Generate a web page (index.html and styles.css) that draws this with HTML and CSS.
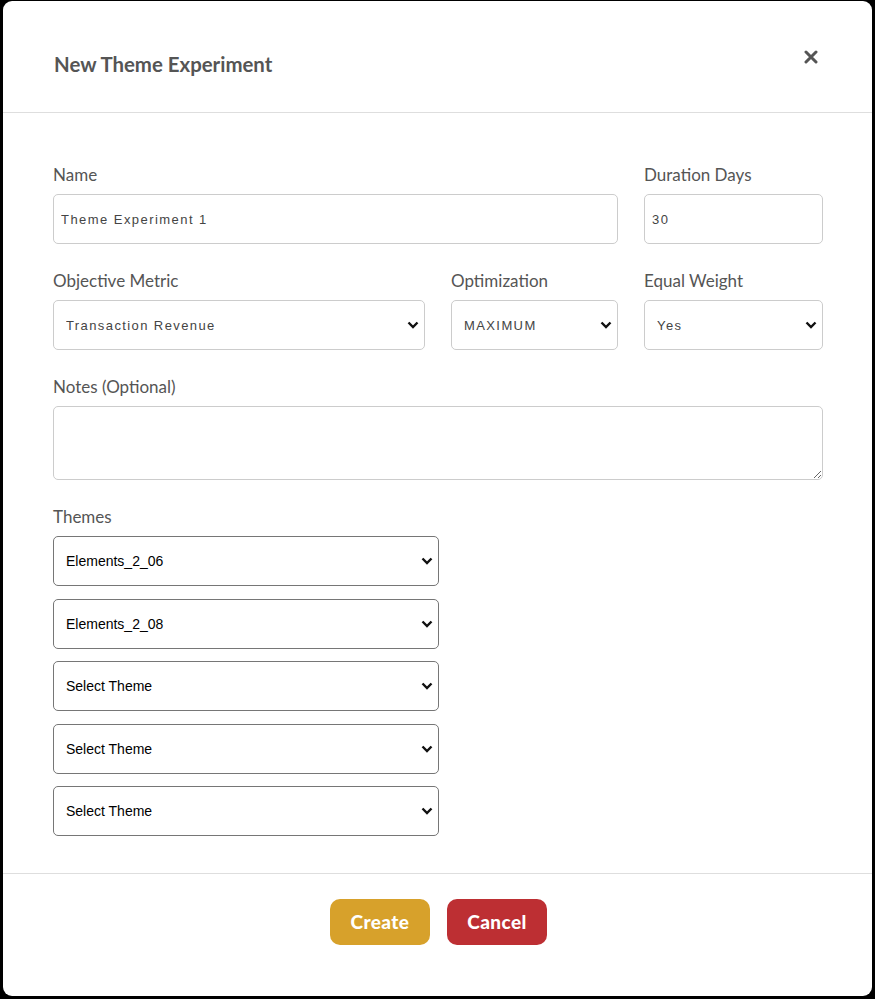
FILE: index.html
```html
<!DOCTYPE html>
<html lang="en">
<head>
    <meta charset="UTF-8">
    <meta name="viewport" content="width=device-width, initial-scale=1.0">
    <title>New Theme Experiment</title>
    <link rel="stylesheet" href="styles.css">
</head>
<body>
    <div class="modal">
        <div class="modal-header">
            <h2 class="modal-title">New Theme Experiment</h2>
            <button class="close-btn" aria-label="Close">
                <svg width="14" height="14" viewBox="0 0 14 14">
                    <path d="M2 2 L12 12 M12 2 L2 12" stroke="#555" stroke-width="3" stroke-linecap="round"/>
                </svg>
            </button>
        </div>

        <div class="modal-body">
            <div class="form-grid">
                <div class="field span-2">
                    <label class="field-label">Name</label>
                    <input class="text-input" type="text" value="Theme Experiment 1">
                </div>
                <div class="field">
                    <label class="field-label">Duration Days</label>
                    <input class="text-input" type="text" value="30">
                </div>

                <div class="field">
                    <label class="field-label">Objective Metric</label>
                    <select class="form-select">
                        <option>Transaction Revenue</option>
                    </select>
                </div>
                <div class="field">
                    <label class="field-label">Optimization</label>
                    <select class="form-select">
                        <option>MAXIMUM</option>
                    </select>
                </div>
                <div class="field">
                    <label class="field-label">Equal Weight</label>
                    <select class="form-select">
                        <option>Yes</option>
                    </select>
                </div>

                <div class="field span-3">
                    <label class="field-label">Notes (Optional)</label>
                    <textarea class="notes"></textarea>
                </div>
            </div>

            <div class="themes">
                <label class="field-label">Themes</label>
                <select class="theme-select"><option>Elements_2_06</option></select>
                <select class="theme-select"><option>Elements_2_08</option></select>
                <select class="theme-select"><option>Select Theme</option></select>
                <select class="theme-select"><option>Select Theme</option></select>
                <select class="theme-select"><option>Select Theme</option></select>
            </div>
        </div>

        <div class="modal-footer">
            <button class="btn btn-create">Create</button>
            <button class="btn btn-cancel">Cancel</button>
        </div>
    </div>
</body>
</html>
```

FILE: styles.css
```css
body {
    margin: 0;
    padding: 1px 3px 3px;
    background: #000;
    font-family: Lato, "Open Sans", sans-serif;
}

.modal {
    background: #fff;
    border-radius: 9px;
    height: 995px;
    box-sizing: border-box;
    display: flex;
    flex-direction: column;
}

.modal-header {
    height: 111px;
    border-bottom: 1px solid #dedede;
    display: flex;
    justify-content: space-between;
    align-items: flex-start;
    padding: 0 54px 0 51px;
}

.modal-title {
    margin: 51px 0 0;
    font-size: 20.4px;
    line-height: 24px;
    font-weight: 700;
    color: #555;
}

.close-btn {
    margin-top: 49px;
    padding: 0;
    border: none;
    background: none;
    width: 14px;
    height: 14px;
    display: block;
}

.close-btn svg {
    display: block;
}

.modal-body {
    flex: 1;
    padding: 51px 49px 37px 50px;
}

.form-grid {
    display: grid;
    grid-template-columns: 372px 167px minmax(0, 1fr);
    column-gap: 26px;
    row-gap: 26px;
}

.span-2 {
    grid-column: span 2;
}

.span-3 {
    grid-column: span 3;
}

.field {
    display: flex;
    flex-direction: column;
    min-width: 0;
}

.field-label {
    display: block;
    font-size: 17px;
    line-height: 22px;
    color: #555;
    margin-bottom: 8px;
}

.text-input {
    min-width: 0;
    height: 50px;
    box-sizing: border-box;
    border: 1px solid #ccc;
    border-radius: 5px;
    padding: 0 7px;
    font-family: "Liberation Sans", Arial, sans-serif;
    font-size: 13px;
    letter-spacing: 1.45px;
    color: #444;
}

/* bold chevron like the reference selects */
.form-select,
.theme-select {
    -webkit-appearance: none;
    appearance: none;
    min-width: 0;
    height: 50px;
    box-sizing: border-box;
    border-radius: 5px;
    background: #fff url("data:image/svg+xml,%3Csvg xmlns='http://www.w3.org/2000/svg' width='12' height='8' viewBox='0 0 12 8'%3E%3Cpath d='M1.5 1.5 L6 6 L10.5 1.5' fill='none' stroke='%23111' stroke-width='2.4'/%3E%3C/svg%3E") no-repeat right 5px center;
    font-family: "Liberation Sans", Arial, sans-serif;
}

.form-select {
    border: 1px solid #ccc;
    padding: 0 20px 0 12px;
    font-size: 13px;
    letter-spacing: 1.4px;
    color: #444;
}

.notes {
    height: 74px;
    box-sizing: border-box;
    border: 1px solid #ccc;
    border-radius: 5px;
    padding: 8px;
    font-family: "Liberation Sans", Arial, sans-serif;
    font-size: 13px;
}

.themes {
    width: 386px;
    margin-top: 26px;
    display: flex;
    flex-direction: column;
}

.theme-select {
    border: 1px solid #767676;
    padding: 0 20px 0 12px;
    font-size: 14px;
    color: #000;
    margin-bottom: 12.5px;
}

.theme-select:last-child {
    margin-bottom: 0;
}

.modal-footer {
    border-top: 1px solid #dedede;
    padding: 25px 0 51px 2px;
    display: flex;
    justify-content: center;
    gap: 17px;
}

.btn {
    width: 100px;
    height: 46px;
    border: none;
    border-radius: 10px;
    font-family: Lato, sans-serif;
    font-size: 19px;
    font-weight: 900;
    letter-spacing: 0.4px;
    line-height: 44px;
    color: #fff;
}

.btn-create {
    background: #d7a12b;
}

.btn-cancel {
    background: #bd2f33;
}
```
